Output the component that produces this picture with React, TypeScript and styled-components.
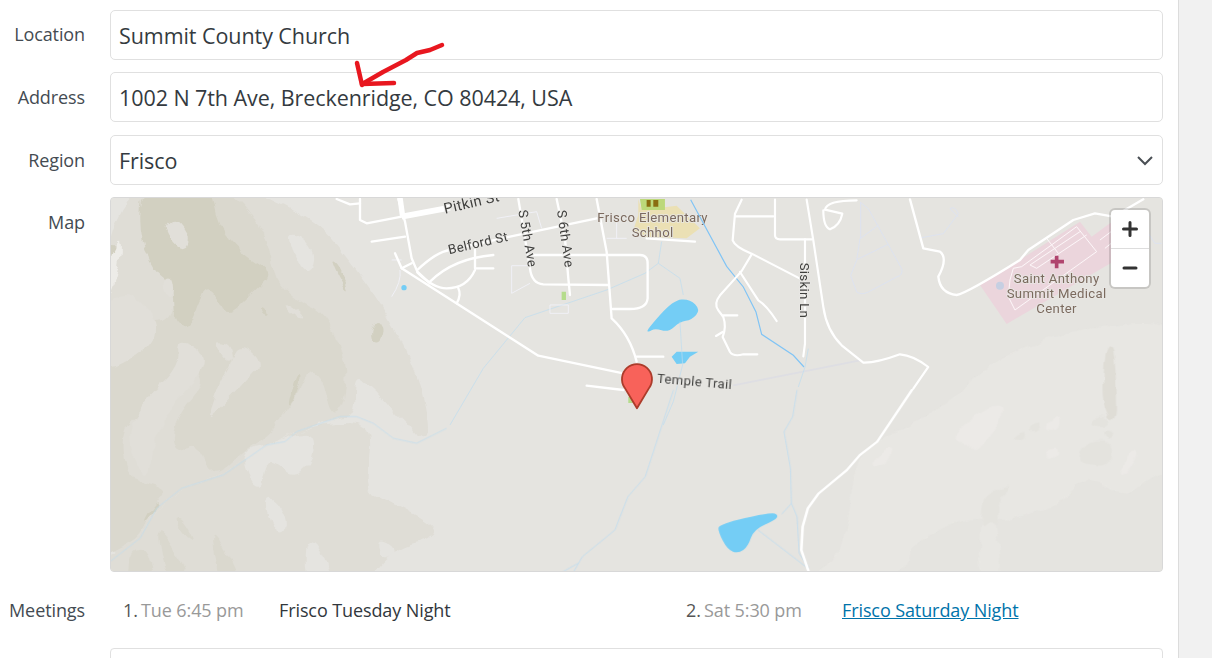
import React from "react";
import styled, { createGlobalStyle } from "styled-components";

const Global = createGlobalStyle`
  html, body { margin: 0; padding: 0; background: #fff; height: 658px; overflow: hidden; }
  #root { height: 658px; }
`;

const Page = styled.div`
  position: relative;
  display: flex;
  height: 658px;
  overflow: hidden;
  font-family: "Open Sans", "Noto Sans", sans-serif;
  color: #32373c;
`;
const Main = styled.main`
  width: 1178px;
  box-sizing: border-box;
  padding: 10px 15px 0 0;
  display: flex;
  flex-direction: column;
`;
const Side = styled.aside`
  flex: 1;
  background: #f1f1f1;
  border-left: 1px solid #dcdcdc;
`;
const Row = styled.div<{ $gap?: number }>`
  display: flex;
  align-items: flex-start;
  margin-bottom: ${(p) => p.$gap ?? 12}px;
`;
const Label = styled.div<{ $top?: number }>`
  width: 85px;
  margin-right: 25px;
  flex: none;
  padding-top: ${(p) => p.$top ?? 12}px;
  text-align: right;
  font-size: 18px;
  line-height: 26px;
  letter-spacing: -0.1px;
  color: #444b52;
`;
const Field = styled.div`
  flex: 1;
  height: 50px;
  box-sizing: border-box;
  border: 1px solid #e0e0e0;
  border-radius: 5px;
  padding: 0 8px;
  display: flex;
  align-items: center;
  justify-content: space-between;
  font-size: 21.5px;
  letter-spacing: -0.07px;
  color: #343a40;
  background: #fff;
`;
const Chevron = styled.svg`
  width: 16px;
  height: 16px;
  margin-right: 1px;
  fill: none;
  stroke: #4a4f54;
  stroke-width: 2;
`;
const MapBox = styled.div`
  position: relative;
  flex: 1;
  height: 375px;
  box-sizing: border-box;
  border: 1px solid #d8d8d8;
  border-radius: 4px;
  overflow: hidden;
  background: #e5e4e0;
`;
const MapArt = styled.svg`
  display: block;
  width: 100%;
  height: 100%;
`;
const ZoomControl = styled.div`
  position: absolute;
  top: 12px;
  right: 13px;
  width: 38px;
  display: flex;
  flex-direction: column;
  background: #fff;
  border-radius: 4px;
  box-shadow: 0 0 0 2px rgba(0, 0, 0, 0.13);
`;
const ZoomButton = styled.div<{ $first?: boolean }>`
  height: 38px;
  display: flex;
  align-items: center;
  justify-content: center;
  border-top: ${(p) => (p.$first ? "none" : "1px solid #ddd")};
`;
const ZoomGlyph = styled.svg`
  width: 18px;
  height: 18px;
  stroke: #333;
  stroke-width: 3;
  stroke-linecap: round;
`;
const MeetingsRow = styled.div`
  display: flex;
  align-items: flex-start;
  margin-top: 25px;
  margin-bottom: 25px;
`;
const MeetingsLabel = styled(Label)`
  padding-top: 0;
`;
const MeetingList = styled.ol`
  flex: 1;
  list-style: none;
  margin: 0;
  padding: 0 0 0 13px;
  display: grid;
  grid-template-columns: 563px 1fr;
  font-size: 18px;
  line-height: 26px;
  letter-spacing: -0.1px;
`;
const Meeting = styled.li`
  display: flex;
`;
const MeetingNo = styled.span`
  width: 18px;
  flex: none;
  color: #555;
`;
const MeetingTime = styled.span`
  width: 138px;
  flex: none;
  color: #999;
`;
const MeetingName = styled.span`
  color: #32373c;
`;
const MeetingLink = styled.a`
  color: #0073aa;
  text-decoration: underline;
`;
const NextBox = styled.div`
  margin-left: 110px;
  height: 80px;
  flex: none;
  border: 1px solid #e0e0e0;
  border-radius: 4px;
`;
const Scribble = styled.svg`
  position: absolute;
  left: 350px;
  top: 35px;
  width: 100px;
  height: 60px;
  pointer-events: none;
  fill: none;
  stroke: #e8171f;
  stroke-width: 4.5;
  stroke-linecap: round;
  stroke-linejoin: round;
`;
const MapLabel = styled.text<{ $c?: string; $s?: number }>`
  font-family: "Roboto", "Noto Sans", sans-serif;
  font-size: ${(p) => p.$s ?? 39.5}px;
  letter-spacing: 1px;
  fill: ${(p) => p.$c ?? "#3f3f3d"};
  stroke: #e8e7e4;
  stroke-width: 5px;
  paint-order: stroke;
`;

/* rounds a list of polygon corners into the soft outline of a terrain band */
function soft(d: string): string {
  const n = d.match(/-?\d+(\.\d+)?/g)!.map(Number);
  const p: [number, number][] = [];
  for (let i = 0; i + 1 < n.length; i += 2) p.push([n[i], n[i + 1]]);
  const mid = (a: [number, number], b: [number, number]) => [(a[0] + b[0]) / 2, (a[1] + b[1]) / 2];
  const s = mid(p[p.length - 1], p[0]);
  let out = `M${s[0]},${s[1]}`;
  p.forEach((c, i) => {
    const m = mid(c, p[(i + 1) % p.length]);
    out += `Q${c[0]},${c[1]} ${m[0]},${m[1]}`;
  });
  return out + "Z";
}

const L1 = "#dfddd6";
const L2 = "#dad8ce";
const L3 = "#d2d0c1";
const LT = "#e1dfd9";
const LL = "#e5e4e0";

const patches1: [string, string][] = [
  [L1, "M-40,-40L360,-40L520,30L640,100L720,200L810,320L890,470L940,600L960,720L930,730L850,650L800,590L740,540L735,665L690,665L560,710L470,750L340,840L215,880L140,940L90,1030L-40,1110Z"],
  [L1, "M-40,1180L-40,1100L90,1030L140,940L215,880L340,840L470,750L610,690L740,680L790,720L760,880L820,910L975,990L970,1030L850,1060L760,1180Z"],
  [L2, "M100,-40L360,-40L480,150L490,240L560,320L640,350L700,480L710,560L690,650L660,660L640,560L600,520L560,600L540,630L480,720L400,770L340,830L300,830L260,750L220,770L180,740L210,650L290,560L230,500L150,600L90,640L30,720L50,840L100,860L170,880L130,930L90,1020L40,1050L-40,1090L-40,420L100,380L190,380L190,270L130,230L90,110Z"],
  [L3, "M100,-40L300,-40L320,90L400,180L490,235L430,290L350,370L320,300L280,280L235,410L190,370L190,270L130,230L85,110Z"],
  [L3, "M-30,125L20,160L15,190L-30,170Z"],
  [L3, "M780,410L800,365L825,400L812,445L790,440Z"],
  [L3, "M660,190L690,215L725,300L690,260Z"],
  [L3, "M560,535L572,540L555,610L530,635Z"],
  [L3, "M95,985L130,925L150,915L120,965Z"],
  [L3, "M455,330L472,340L478,362L458,355Z"],
  [LL, "M530,120L570,125L615,170L610,220L580,235L550,170Z"],
  [LT, "M165,90L200,65L245,130L220,170L180,130Z"],
  [LT, "M155,250L185,240L192,300L170,315Z"],
  [LT, "M315,440L360,445L370,500L330,560L305,640L290,675L370,600L430,530L450,515L440,480L380,445L360,510L330,470Z"],
  [LT, "M525,320L580,360L580,380L530,345Z"],
  [LT, "M200,430L285,470L270,540L180,640L130,740L110,860L70,800L55,700L100,620L210,510Z"],
  [LT, "M-20,320L60,290L120,345L150,430L30,520L-20,510Z"],
  [LL, "M735,540L780,570L830,660L880,700L900,690L930,730L735,665Z"],
  [LL, "M390,770L470,750L610,700L615,790L550,850L500,800L470,800L460,880L420,870Z"],
  [LL, "M460,920L490,905L530,970L525,1015L490,1000Z"],
  [LL, "M580,1050L620,1035L680,1180L590,1180Z"],
  [LL, "M805,1030L865,1065L830,1095L805,1070Z"],
  [L2, "M190,965L220,980L255,1045L215,1015Z"],
  [L2, "M135,1010L170,1020L250,1180L180,1180Z"],
  [L2, "M300,1000L340,1050L400,1180L335,1180Z"],
  [L2, "M60,1070L110,1060L140,1180L50,1180Z"],
];

const patches2: [string, string][] = [
  ["#e8e7e3", "M-170,900L-160,760L-40,650L-20,400L50,330L190,270L310,175L400,100L470,65L630,0L1000,-40L1000,400L880,430L790,510L720,445L640,450L650,490L500,560L400,570L300,570L150,640L140,740L-170,740Z"],
  ["#e8e7e3", "M360,570L400,510L430,760L360,760Z"],
  ["#dfddd6", "M735,60L762,50L770,180L772,260L750,272L728,200Z"],
  ["#e4e3de", "M690,260L745,255L750,285L700,290Z"],
  ["#e4e3de", "M670,340L750,330L755,410L650,400Z"],
  ["#e4e3de", "M460,320L500,305L500,330L465,335Z"],
  ["#e4e3de", "M510,285L540,275L535,300L510,305Z"],
  ["#eceae7", "M280,310L400,215L440,245L350,375L330,340L300,345Z"],
  ["#eceae7", "M560,280L605,250L600,300L555,305Z"],
  ["#eceae7", "M550,365L595,350L595,380L565,395Z"],
  ["#eceae7", "M770,440L810,360L842,370L800,435Z"],
  ["#e4e3de", "M375,490L470,460L410,510L420,590L390,570L360,600L370,520Z"],
  ["#e3e2dd", "M725,300L755,305L750,325L730,325Z"],
  ["#eceae7", "M40,380L100,345L95,385L40,420Z"],
];

const road = { fill: "none", stroke: "#fff", strokeLinecap: "round", strokeLinejoin: "round" } as const;
const STREAM = "#bcdcf0";
const LAKE = "#74cdf5";

export default function App() {
  return (
    <Page>
      <Global />
      <Main>
        <Row>
          <Label $top={11}>Location</Label>
          <Field>Summit County Church</Field>
        </Row>
        <Row $gap={13}>
          <Label>Address</Label>
          <Field>1002 N 7th Ave, Breckenridge, CO 80424, USA</Field>
        </Row>
        <Row>
          <Label>Region</Label>
          <Field>
            Frisco
            <Chevron viewBox="0 0 16 16">
              <polyline points="1,5 8,12 15,5" />
            </Chevron>
          </Field>
        </Row>
        <Row $gap={0}>
          <Label>Map</Label>
          <MapBox>
            <MapArt viewBox="111 198 1051 373" preserveAspectRatio="none">
              <defs>
                <filter id="rough" filterUnits="userSpaceOnUse" x="100" y="190" width="1070" height="390">
                  <feTurbulence type="fractalNoise" baseFrequency="0.07" numOctaves="2" seed="4" result="n" />
                  <feDisplacementMap in="SourceGraphic" in2="n" scale="9" xChannelSelector="R" yChannelSelector="G" />
                </filter>
              </defs>
              <rect x="100" y="190" width="1070" height="390" fill="#e5e4e0" />
              <g filter="url(#rough)">
                {/* terrain, left */}
                <g transform="translate(110 195) scale(.3333)">
                  {patches1.map(([c, d], i) => (
                    <path key={i} d={soft(d)} fill={c} />
                  ))}
                  <path d={soft("M-5,190L35,125L30,210L5,290L-5,300Z")} fill="#edece8" />
                </g>
                {/* terrain, right */}
                <g transform="translate(860 330) scale(.3333)">
                  {patches2.map(([c, d], i) => (
                    <path key={i} d={soft(d)} fill={c} />
                  ))}
                </g>
              </g>
              {/* hospital */}
              <g transform="translate(780 190) scale(.3333)">
                <path d="M600,285L715,212L900,95L935,140L990,100L1060,70V180L680,402Z" fill="#ebd5dc" />
                <g fill="none" stroke="#fdf7f9" strokeWidth="3">
                  <path d="M700,235L725,230L890,110L950,185L705,360L685,320L690,270Z" />
                  <path d="M750,225L900,125M770,235L920,135M750,225L770,235M800,145L835,190M960,150L1000,120M975,175L1000,155" />
                </g>
                <circle cx="660" cy="287" r="12" fill="#c6cfe2" />
                <path d="M830,197V235M812,215H852" stroke="#b0446e" strokeWidth="11" />
                <MapLabel $c="#7b6a5e" textAnchor="middle" x="830" y="279">Saint Anthony</MapLabel>
                <MapLabel $c="#7b6a5e" textAnchor="middle" x="830" y="323">Summit Medical</MapLabel>
                <MapLabel $c="#7b6a5e" textAnchor="middle" x="830" y="368">Center</MapLabel>
              </g>
              {/* streams, lower */}
              <g transform="translate(500 390) scale(.4336 .3333)" fill="none" stroke={STREAM} strokeWidth="2">
                <path d="M400,0L335,260L295,320L265,420L190,500L170,545M180,520L145,545M685,0L675,80L655,125L670,235L672,340L650,372M672,340L685,380L690,490L712,535M595,420L705,530" />
              </g>
              {/* streams, left */}
              <g transform="translate(110 195) scale(.3333)" fill="none" stroke={STREAM} strokeWidth="2">
                <path d="M0,1100L90,1030L140,940L215,880L340,840L470,750L525,740L560,710L690,665H740L790,685L850,730L920,745L1010,700" />
              </g>
              {/* town */}
              <g transform="translate(330 195) scale(.3333)">
                <path d="M925,12L935,45L1040,32L1110,100L1070,130L945,125L910,105L925,60Z" fill="#ebe0b4" />
                <path d="M930,12H1005V45L935,45Z" fill="#bcd87a" />
                <path d="M950,15H962V35H950ZM970,15H985V35H970Z" fill="#8a6d10" />
                <path d="M695,290H708V315H695ZM895,605H912V624H895Z" fill="#b5dc8c" />
                <circle cx="222" cy="278" r="8" fill={LAKE} />
                <path d={soft("M950,405L1030,315L1080,312L1112,345L1085,375L1050,380L1015,412L975,400L955,412Z")} fill={LAKE} />
                <path d="M1025,485L1040,470L1105,470L1080,485L1065,505L1040,507Z" fill={LAKE} />
                <g fill="none" stroke={STREAM} strokeWidth="2">
                  <path d="M360,690L460,520L585,368L830,285L945,235L985,205L995,140M985,205L1050,250L1060,300M1050,380L1058,510L1030,620L1000,690" />
                </g>
                <g fill="none" stroke="#f0f0f6" strokeWidth="3">
                  <path d="M545,212V295L600,265M545,212H595M660,330H715V355H660ZM500,70L620,50L635,100M830,130H890M860,80V130M185,305Q215,260 210,225M185,195H215" />
                </g>
                <g {...road} strokeWidth="7">
                  <path d="M215,220L625,482L880,535" />
                  <path d="M205,12L225,80L245,190L262,230L300,265" />
                  <path d="M90,12V75L110,85L215,65" />
                  <path d="M20,12L60,28L90,25" />
                  <path d="M125,140L225,125" />
                  <path d="M195,175L215,220L245,205" />
                  <path d="M262,225Q320,170 360,165L540,125L800,70" />
                  <path d="M300,260Q370,190 490,180M435,165V220H490M435,225Q410,280 350,280Q310,280 262,232M385,280Q395,300 380,325" />
                  <path d="M565,12L585,130L600,220Q605,265 640,268L835,270" />
                  <path d="M680,12L705,130L715,250L720,300" />
                  <path d="M605,180H930Q955,180 953,210V310Q950,342 900,342H848" />
                  <path d="M800,12L830,170L845,370Q900,420 920,500" />
                  <path d="M920,485H1000M770,572L880,585" />
                  <path d="M950,130L1095,140" />
                </g>
                <path d="M215,65L360,38" {...road} strokeWidth="18" strokeLinecap="butt" />
                <path d="M210,8L218,65" {...road} strokeWidth="16" strokeLinecap="butt" />
                <MapLabel $s={44} transform="translate(345 56) rotate(-13)">Pitkin St</MapLabel>
                <MapLabel transform="translate(358 178) rotate(-13)">Belford St</MapLabel>
                <MapLabel transform="translate(565 47) rotate(80)">S 5th Ave</MapLabel>
                <MapLabel transform="translate(681 47) rotate(82)">S 6th Ave</MapLabel>
                <MapLabel $c="#7b6a5e" textAnchor="middle" x="968" y="80">Frisco Elementary</MapLabel>
                <MapLabel $c="#7b6a5e" textAnchor="middle" x="968" y="126">Schhol</MapLabel>
              </g>
              {/* east cluster */}
              <g transform="translate(680 197) scale(.3333)">
                <path d="M160,565L540,490" fill="none" stroke="#dedee3" strokeWidth="5" />
                <path d="M385,455L375,510L355,570" fill="none" stroke={STREAM} strokeWidth="2" />
                <path d="M32,8L140,208L190,270L228,345L245,412L340,475L372,510" fill="none" stroke="#80c4f5" strokeWidth="3.5" />
                <g fill="none" stroke="#dde2ef" strokeWidth="3">
                  <path d="M540,15L565,35L665,215Q670,235 650,240L565,285Q545,295 530,285L512,235L530,190L540,125L595,85M530,188L625,142M542,15V125" />
                  <path d="M725,122L790,110L835,50Q825,25 810,35L835,60" />
                </g>
                <g {...road} strokeWidth="6.5">
                  <path d="M185,8L165,50L158,130Q165,150 215,170L360,245" />
                  <path d="M165,58H280M285,8V115Q285,127 300,127H395" />
                  <path d="M375,127V440L370,478" />
                  <path d="M215,172L185,222L165,245L120,295Q100,320 115,340L130,360Q140,390 128,420L150,465Q160,480 190,472H232" />
                  <path d="M130,355H172M108,417L128,405" />
                  <path d="M180,225L235,310Q260,325 290,372" />
                  <path d="M380,8L400,130L430,330Q440,400 485,445L550,497Q590,498 660,472Q700,475 745,510L700,575" />
                  <path d="M430,40Q430,90 450,97Q480,85 487,50L435,38Q440,10 530,10" />
                </g>
                <MapLabel transform="translate(360 197) rotate(90)">Siskin Ln</MapLabel>
              </g>
              <g transform="translate(780 190) scale(.3333)">
                <g {...road} strokeWidth="7">
                  <path d="M390,28L430,175L480,185Q505,205 475,260Q480,310 530,315Q560,310 720,210L745,180L880,90L945,70L1000,80L1090,28" />
                </g>
                <path d="M1105,130L1125,160H1145" fill="none" stroke="#dde2ef" strokeWidth="3" />
              </g>
              <g transform="translate(500 390) scale(.4336 .3333)">
                <path d="M950,0L870,155L830,195L800,240L735,310L710,355L698,410L695,480L712,545" {...road} strokeWidth="6" />
                <path d={soft("M505,402L625,366L642,375L635,390L585,418L572,470L550,490L525,480L503,425Z")} fill={LAKE} />
              </g>
              <g transform="translate(330 195) scale(.3333)">
                <MapLabel transform="translate(980 563) rotate(5)">Temple Trail</MapLabel>
                <path d="M921,640L884,578A45,45 0 1 1 958,578Z" fill="#f8625a" stroke="#ac3c2b" strokeWidth="5.5" strokeLinejoin="round" />
              </g>
            </MapArt>
            <ZoomControl>
              <ZoomButton $first>
                <ZoomGlyph viewBox="0 0 18 18">
                  <path d="M2.5,9H15.5M9,2.5V15.5" />
                </ZoomGlyph>
              </ZoomButton>
              <ZoomButton>
                <ZoomGlyph viewBox="0 0 18 18">
                  <path d="M3,9H15" />
                </ZoomGlyph>
              </ZoomButton>
            </ZoomControl>
          </MapBox>
        </Row>
        <MeetingsRow>
          <MeetingsLabel>Meetings</MeetingsLabel>
          <MeetingList>
            <Meeting>
              <MeetingNo>1.</MeetingNo>
              <MeetingTime>Tue 6:45 pm</MeetingTime>
              <MeetingName>Frisco Tuesday Night</MeetingName>
            </Meeting>
            <Meeting>
              <MeetingNo>2.</MeetingNo>
              <MeetingTime>Sat 5:30 pm</MeetingTime>
              <MeetingLink href="#">Frisco Saturday Night</MeetingLink>
            </Meeting>
          </MeetingList>
        </MeetingsRow>
        <NextBox />
      </Main>
      <Side />
      <Scribble viewBox="350 35 100 60">
        <path d="M442,45L430,50L417,53L406,60L383,72L364,83" />
        <path d="M357,63L362,85" />
        <path d="M362,84L394,83" />
      </Scribble>
    </Page>
  );
}
